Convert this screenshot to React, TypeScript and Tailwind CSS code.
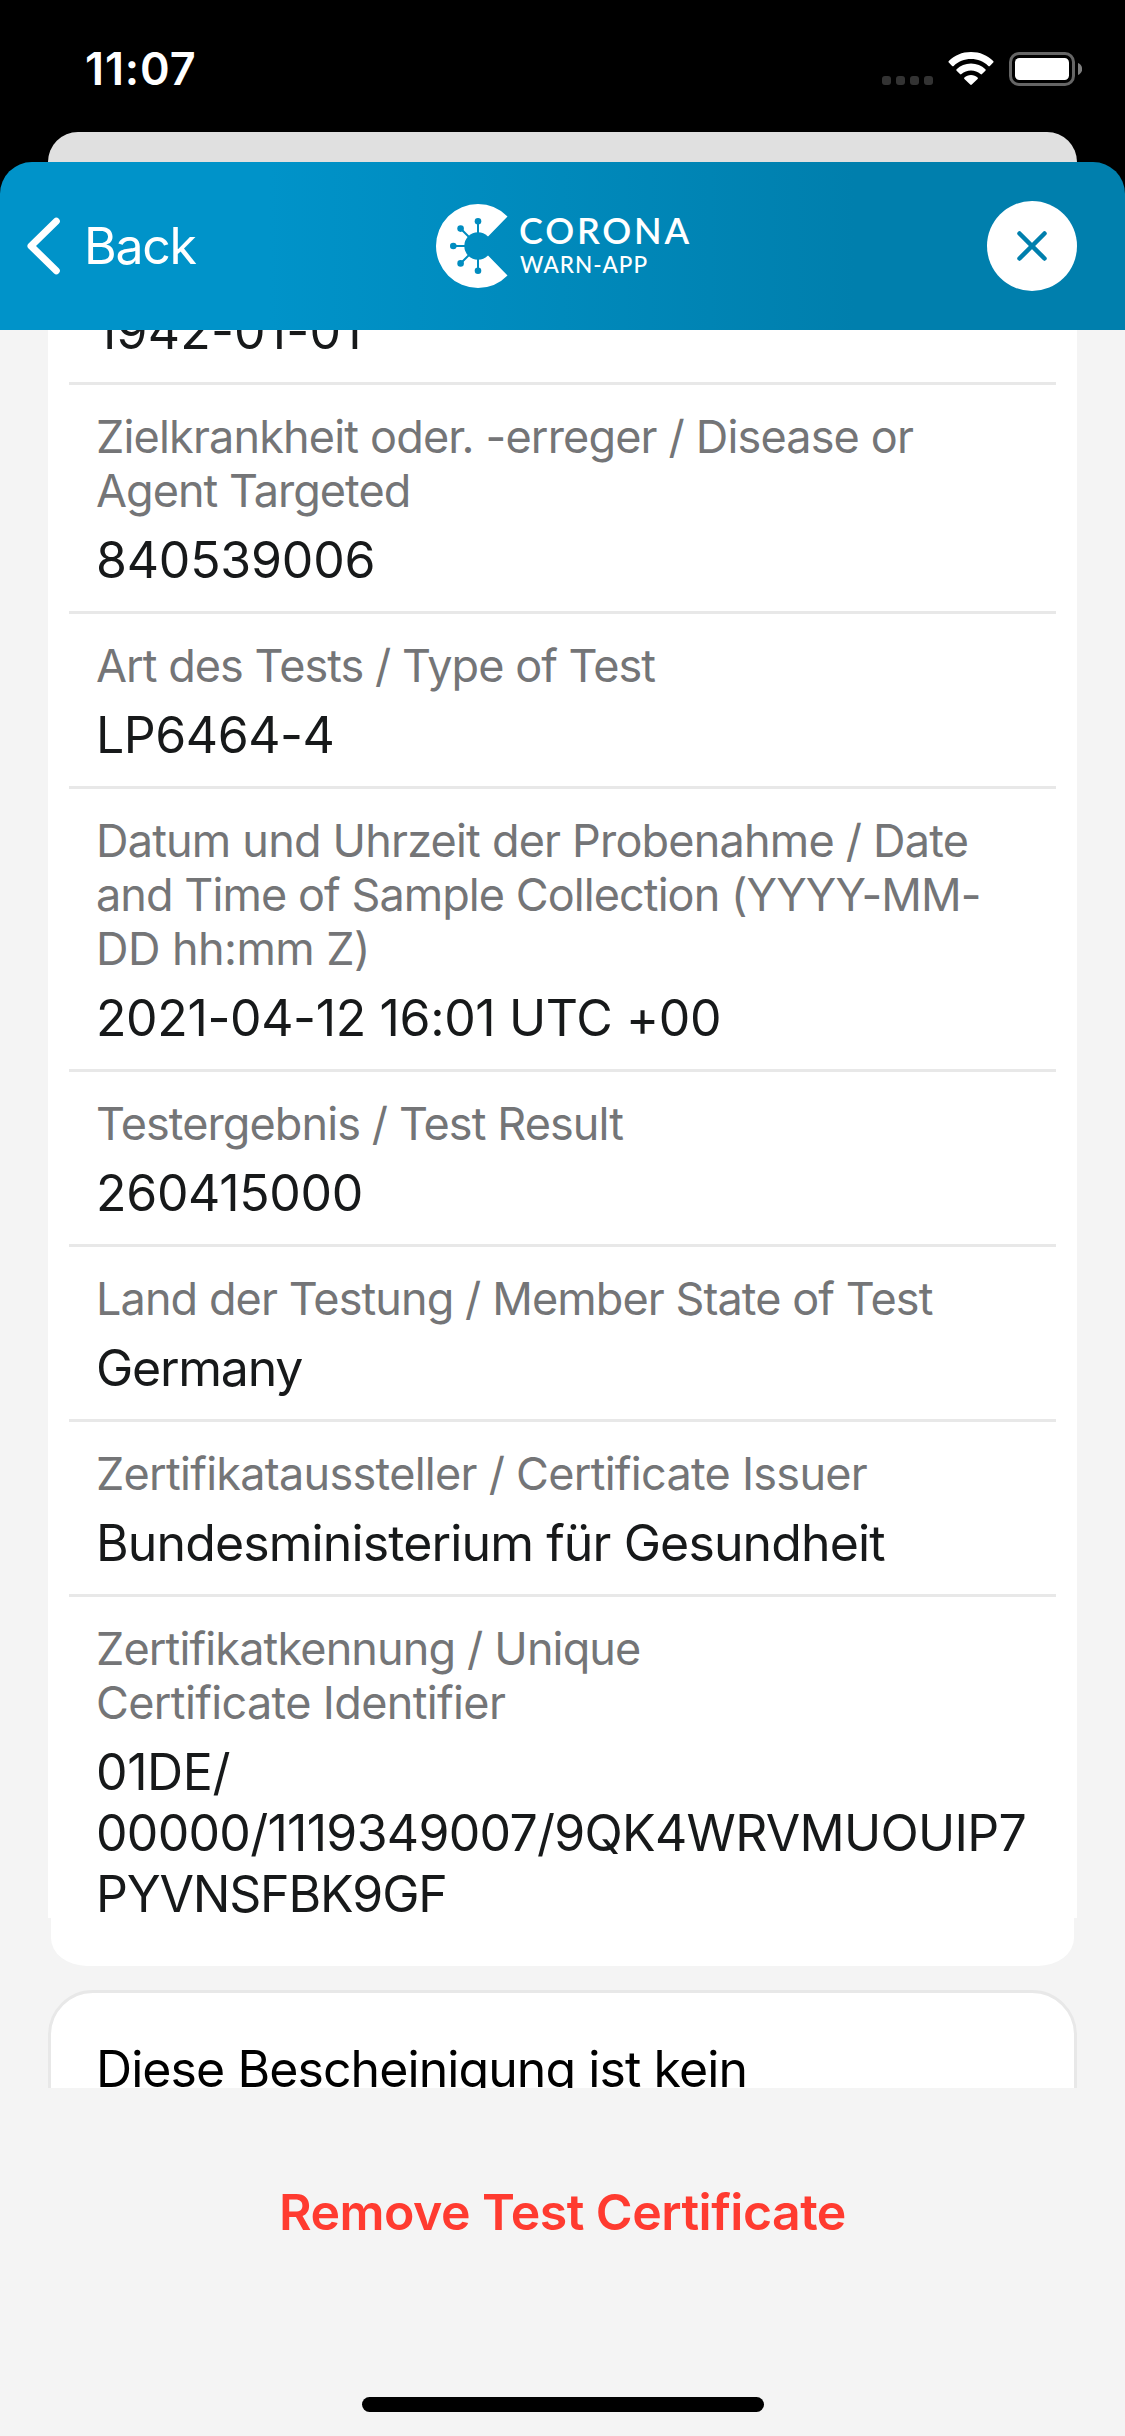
import type { ReactNode } from "react";

type Line = { text: string; track: string };
type Entry = { label: Line[]; value: Line[] };

const entries: Entry[] = [
  {
    label: [
      { text: "Zielkrankheit oder. -erreger / Disease or", track: "tracking-[-0.83px]" },
      { text: "Agent Targeted", track: "tracking-[-0.98px]" },
    ],
    value: [{ text: "840539006", track: "tracking-[-0.2px]" }],
  },
  {
    label: [{ text: "Art des Tests / Type of Test", track: "tracking-[-0.96px]" }],
    value: [{ text: "LP6464-4", track: "tracking-[-0.46px]" }],
  },
  {
    label: [
      { text: "Datum und Uhrzeit der Probenahme / Date", track: "tracking-[-0.8px]" },
      { text: "and Time of Sample Collection (YYYY-MM-", track: "tracking-[-0.93px]" },
      { text: "DD hh:mm Z)", track: "tracking-[-0.56px]" },
    ],
    value: [{ text: "2021-04-12 16:01 UTC +00", track: "tracking-[-0.37px]" }],
  },
  {
    label: [{ text: "Testergebnis / Test Result", track: "tracking-[-0.9px]" }],
    value: [{ text: "260415000", track: "tracking-[-0.31px]" }],
  },
  {
    label: [{ text: "Land der Testung / Member State of Test", track: "tracking-[-0.91px]" }],
    value: [{ text: "Germany", track: "tracking-[-1.25px]" }],
  },
  {
    label: [{ text: "Zertifikataussteller / Certificate Issuer", track: "tracking-[-0.72px]" }],
    value: [{ text: "Bundesministerium für Gesundheit", track: "tracking-[-0.88px]" }],
  },
];

const identifier: Entry = {
  label: [
    { text: "Zertifikatkennung / Unique", track: "tracking-[-0.86px]" },
    { text: "Certificate Identifier", track: "tracking-[-0.64px]" },
  ],
  value: [
    { text: "01DE/", track: "tracking-[-0.4px]" },
    { text: "00000/1119349007/9QK4WRVMUOUIP7", track: "tracking-[-0.71px]" },
    { text: "PYVNSFBK9GF", track: "tracking-[-1.2px]" },
  ],
};

function StatusBar() {
  return (
    <div className="flex h-[132px] shrink-0 items-start justify-between pr-[43px] pl-[85px] text-white">
      <span className="mt-[42px] text-[45px] leading-[54px] font-semibold tracking-[0.9px]">11:07</span>
      <div className="mt-[52px] flex h-[34px] items-start">
        <div className="mt-[24px] mr-[15px] flex gap-[5px]">
          {[0, 1, 2, 3].map((i) => (
            <span key={i} className="size-[9px] rounded-[3px] bg-[#333333]" />
          ))}
        </div>
        <svg className="mr-[15px] h-[34px] w-[46px]" viewBox="0 0 46 34" fill="currentColor">
          <path d="M23 0C32 0 39.6 3.400 45.200 8.900c.5.5.5 1.200 0 1.700l-3.300 3.300c-.5.5-1.100.5-1.600 0C35.800 9.600 29.700 7.100 23 7.100S10.200 9.600 5.700 13.900c-.5.5-1.100.5-1.600 0L.8 10.600c-.5-.5-.5-1.200 0-1.700C6.400 3.400 14 0 23 0z" />
          <path d="M23 11.500c5.700 0 10.600 2.200 14.400 5.700.5.5.5 1.100 0 1.600l-3.400 3.300c-.5.5-1 .5-1.500 0-2.600-2.300-5.800-3.600-9.500-3.600s-6.900 1.300-9.500 3.600c-.5.5-1 .5-1.500 0l-3.400-3.300c-.5-.5-.5-1.100 0-1.600 3.800-3.500 8.700-5.700 14.400-5.700z" />
          <path d="M23 23c2.600 0 4.800.9 6.600 2.400.5.5.5 1 0 1.500l-5.800 5.700c-.5.5-1.100.5-1.600 0l-5.800-5.700c-.5-.5-.5-1 0-1.500C18.200 23.900 20.400 23 23 23z" />
        </svg>
        <svg className="h-[34px] w-[73px]" viewBox="0 0 73 34">
          <rect x="1.500" y="1.500" width="63" height="31" rx="8.500" fill="none" stroke="#666" strokeWidth="3" />
          <rect x="6" y="6" width="54" height="22" rx="4.500" fill="#fff" />
          <path d="M69 11c2.700 1 4.200 3.400 4.200 6s-1.500 5-4.200 6z" fill="#7f7f7f" />
        </svg>
      </div>
    </div>
  );
}

function Logo() {
  return (
    <div className="flex h-[84px] items-start text-white">
      <svg className="h-[84px] w-[74px]" viewBox="0 0 74 84">
        <mask id="virus" maskUnits="userSpaceOnUse" x="0" y="0" width="74" height="84">
          <rect width="74" height="84" fill="#fff" />
          <circle cx="42" cy="42" r="13.700" />
          <g stroke="#000" strokeWidth="2">
            <path d="M42 42V17M42 42V67M42 42H17M42 42L24.500 24.500M42 42L24.500 59.500" />
          </g>
          <circle cx="42" cy="17.300" r="3.300" />
          <circle cx="42" cy="66.700" r="3.300" />
          <circle cx="17.300" cy="42" r="3.300" />
          <circle cx="24.600" cy="24.600" r="3.300" />
          <circle cx="24.600" cy="59.400" r="3.300" />
        </mask>
        <path
          mask="url(#virus)"
          fill="#fff"
          d="M71.500 12.500A41.700 42 0 0 0 42 0A42 42 0 0 0 42 84A41.700 42 0 0 0 71.500 71.500L52.300 51.700L42 42L52.300 32.300Z"
        />
      </svg>
      <div className="ml-[9px] flex flex-col font-['Lato']">
        <span className="mt-[5px] text-[36px] leading-[42px] font-semibold tracking-[2.8px]">CORONA</span>
        <span className="mt-[1px] ml-px text-[22.5px] leading-[26px] font-medium tracking-[1px]">WARN-APP</span>
      </div>
    </div>
  );
}

function Header() {
  return (
    <header className="grid h-[168px] shrink-0 grid-cols-[436px_1fr_138px] items-center rounded-t-[32px] bg-[linear-gradient(90deg,#0093c9_0%,#0093c9_24%,#007fad_76%,#007fad_100%)]">
      <button className="flex items-center pl-[25px] text-white">
        <svg className="h-[60px] w-[36px]" viewBox="0 0 36 60" fill="none" stroke="currentColor" strokeWidth="7" strokeLinecap="round" strokeLinejoin="round">
          <path d="M31.300 5.300L6 30L31.300 54.700" />
        </svg>
        <span className="ml-[23px] text-[50px] leading-[60px] tracking-[-1.3px]">Back</span>
      </button>
      <Logo />
      <button className="flex size-[90px] items-center justify-center rounded-full bg-white text-[#007fad]">
        <svg className="size-[32px]" viewBox="0 0 32 32" fill="none" stroke="currentColor" strokeWidth="4.500" strokeLinecap="round">
          <path d="M3.500 3.500L28.500 28.500M28.500 3.500L3.500 28.500" />
        </svg>
      </button>
    </header>
  );
}

function Lines({ lines, className }: { lines: Line[]; className: string }) {
  return (
    <p className={className}>
      {lines.map((l) => (
        <span key={l.text} className={"block whitespace-nowrap " + l.track}>
          {l.text}
        </span>
      ))}
    </p>
  );
}

function Row({ children, divider = true }: { children: ReactNode; divider?: boolean }) {
  return (
    <div className={"mx-[21px] pl-[27px] " + (divider ? "border-b-[3px] border-[#e8e8e8] pb-[20px]" : "h-[321px]")}>
      {children}
    </div>
  );
}

function EntryText({ entry }: { entry: Entry }) {
  return (
    <>
      <Lines lines={entry.label} className="pt-[25px] text-[45px] leading-[54px] text-[#747577]" />
      <Lines lines={entry.value} className="mt-[12px] text-[50px] leading-[61px] text-[#17191a]" />
    </>
  );
}

export default function App() {
  return (
    <div className="flex h-[2436px] w-[1125px] flex-col overflow-hidden bg-black font-['Inter',sans-serif]">
      <StatusBar />
      <div className="mx-[48px] h-[30px] shrink-0 rounded-t-[30px] bg-[#e0e0e0]" />
      <Header />
      <main className="flex h-[1758px] shrink-0 flex-col overflow-hidden bg-[#f4f4f4] px-[48px]">
        <section className="-mt-[29px] shrink-0">
          <div className="bg-white">
            <Row>
              <p className="text-[50px] leading-[61px] tracking-[0.19px] text-[#17191a]">1942-01-01</p>
            </Row>
            {entries.map((e) => (
              <Row key={e.label[0].text}>
                <EntryText entry={e} />
              </Row>
            ))}
            <Row divider={false}>
              <EntryText entry={identifier} />
            </Row>
          </div>
          <div className="mx-[3px] h-[48px] rounded-br-[36px_28px] rounded-bl-[36px_28px] bg-white" />
        </section>
        <section className="mt-[24px] h-[300px] shrink-0 rounded-t-[45px] border-[3px] border-[#e8e8e8] bg-white pt-[46px] pl-[45px]">
          <p className="text-[50px] leading-[61px] tracking-[-0.92px] text-black">Diese Bescheinigung ist kein</p>
        </section>
      </main>
      <footer className="flex h-[348px] shrink-0 flex-col items-center bg-[#f4f4f4]">
        <button className="mt-[94px] text-[50px] leading-[61px] font-semibold tracking-[-0.52px] text-[#ff3b30]">
          Remove Test Certificate
        </button>
        <div className="mt-auto mb-[24px] h-[15px] w-[402px] rounded-full bg-black" />
      </footer>
    </div>
  );
}
